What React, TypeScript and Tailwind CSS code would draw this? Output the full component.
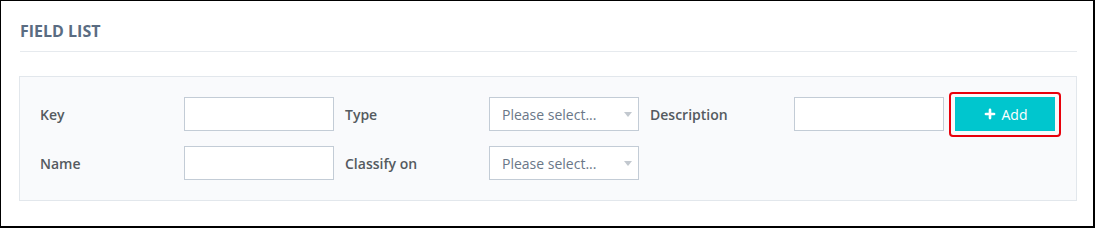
import { Plus } from "lucide-react";

function Label({ children }: { children: React.ReactNode }) {
  return <div className="w-[144px] shrink-0 text-[14px] font-semibold text-[#555a60]">{children}</div>;
}

function TextInput() {
  return <input type="text" className="w-[150px] h-[34px] shrink-0 border border-[#c3ccd6] bg-white outline-none" />;
}

function Select() {
  return (
    <div className="relative w-[150px] h-[34px] shrink-0 border border-[#c3ccd6] bg-white flex items-center pl-[12px] text-[14px] text-[#6a7787]">
      Please select...
      <span className="absolute right-[6px] top-[14px] w-0 h-0 border-l-[4px] border-r-[4px] border-t-[5px] border-l-transparent border-r-transparent border-t-[#c2c8cf]" />
    </div>
  );
}

export default function App() {
  return (
    <div
      className="w-[1095px] h-[228px] bg-white border-l border-t border-r-2 border-b-2 border-black pl-[18px] pr-[16px]"
      style={{ fontFamily: '"Open Sans", "Noto Sans", sans-serif' }}
    >
      <div className="pt-[20px] pb-[10px] ml-[1px] border-b border-[#e6eaee]">
        <h2 className="text-[16px] leading-[20px] font-bold text-[#5a6c82]">FIELD LIST</h2>
      </div>

      <div className="mt-[24px] border border-[#e2e7ec] bg-[#f9fafc] px-[20px] py-[20px] flex flex-col gap-[15px]">
        <div className="flex items-center">
          <Label>Key</Label>
          <TextInput />
          <div className="ml-[11px]"><Label>Type</Label></div>
          <Select />
          <div className="ml-[11px]"><Label>Description</Label></div>
          <TextInput />
          <div className="relative ml-[11px]">
            <span className="absolute -left-[6px] -right-[6px] -top-[5px] -bottom-[6px] border-2 border-[#e8000b] rounded-[4px]" />
            <button
              type="button"
              className="relative w-[100px] h-[34px] bg-[#00c6ce] text-white text-[14px] flex items-center justify-center gap-[5px]"
            >
              <Plus size={14} strokeWidth={4.5} />
              Add
            </button>
          </div>
        </div>
        <div className="flex items-center">
          <Label>Name</Label>
          <TextInput />
          <div className="ml-[11px]"><Label>Classify on</Label></div>
          <Select />
        </div>
      </div>
    </div>
  );
}
